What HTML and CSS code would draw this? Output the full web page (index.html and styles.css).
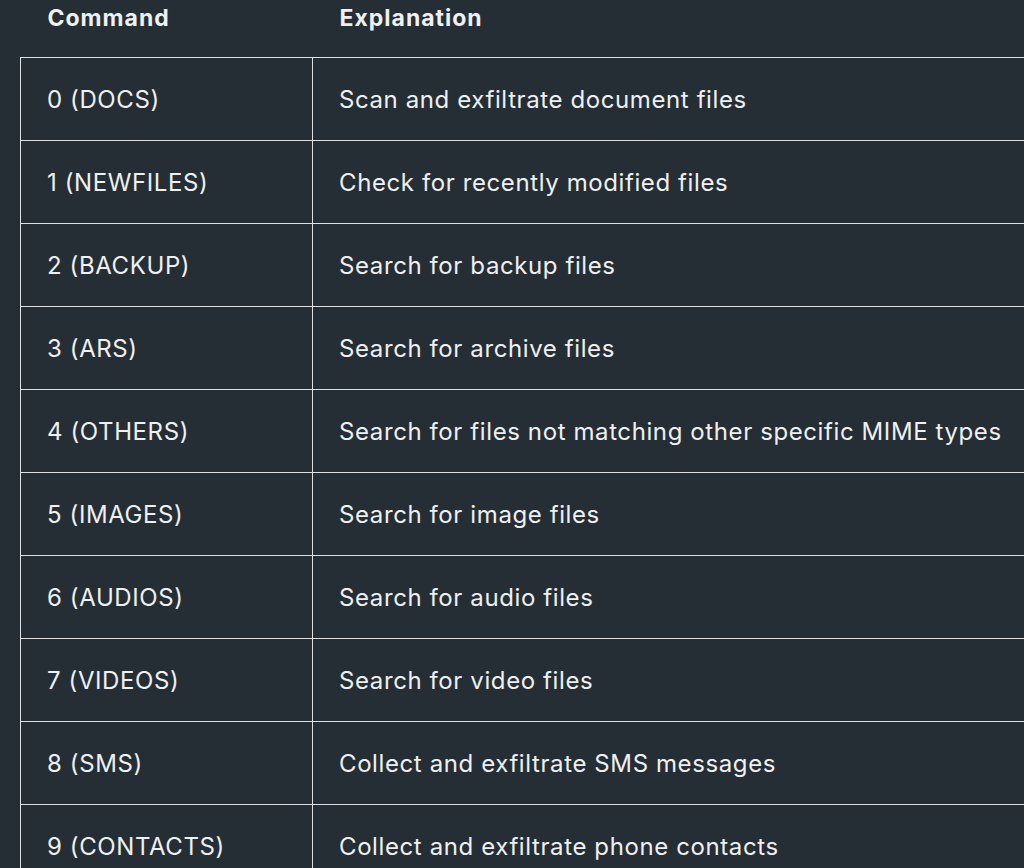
FILE: index.html
```html
<!DOCTYPE html>
<html lang="en">
<head>
  <meta charset="UTF-8">
  <title>Commands</title>
  <link rel="stylesheet" href="styles.css">
</head>
<body>

  <table class="cmd-table">
    <thead>
      <tr>
        <th class="col-cmd">Command</th>
        <th class="col-exp">Explanation</th>
      </tr>
    </thead>
    <tbody>
      <tr><td>0 (DOCS)</td><td>Scan and exfiltrate document files</td></tr>
      <tr><td>1 (NEWFILES)</td><td>Check for recently modified files</td></tr>
      <tr><td>2 (BACKUP)</td><td>Search for backup files</td></tr>
      <tr><td>3 (ARS)</td><td>Search for archive files</td></tr>
      <tr><td>4 (OTHERS)</td><td>Search for files not matching other specific MIME types</td></tr>
      <tr><td>5 (IMAGES)</td><td>Search for image files</td></tr>
      <tr><td>6 (AUDIOS)</td><td>Search for audio files</td></tr>
      <tr><td>7 (VIDEOS)</td><td>Search for video files</td></tr>
      <tr><td>8 (SMS)</td><td>Collect and exfiltrate SMS messages</td></tr>
      <tr><td>9 (CONTACTS)</td><td>Collect and exfiltrate phone contacts</td></tr>
    </tbody>
  </table>

</body>
</html>
```

FILE: styles.css
```css
html, body { margin: 0; height: 100%; overflow: hidden; }
body { background: #252e35; color: #eef0f1; font-family: Inter, "Liberation Sans", Arial, sans-serif; font-size: 24px; letter-spacing: 0.6px; }
.cmd-table { border-collapse: collapse; margin-left: 20px; width: 1120px; table-layout: fixed; }
.cmd-table th { height: 57px; padding: 0 0 21px 27px; text-align: left; font-weight: 700; font-size: 23px; letter-spacing: 1px; vertical-align: middle; box-sizing: border-box; }
.cmd-table .col-cmd { width: 292px; }
.cmd-table td { height: 80px; padding: 2px 0 0 26px; border: 1.5px solid #dde1e4; vertical-align: middle; white-space: nowrap; }
```
